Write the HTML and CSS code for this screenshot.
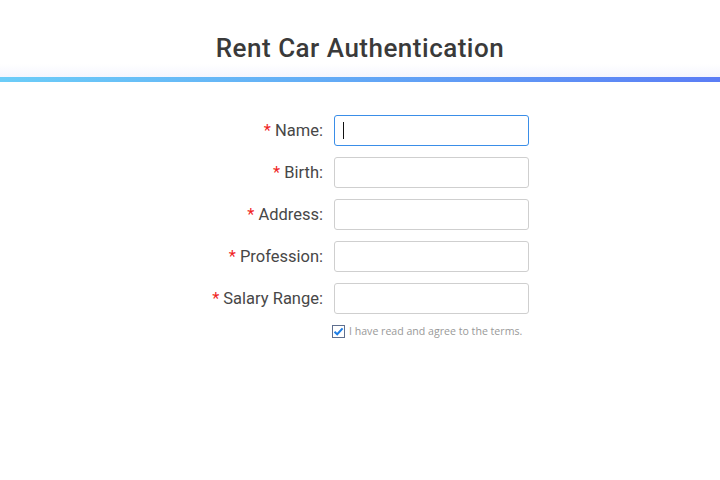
FILE: index.html
```html
<!DOCTYPE html>
<html>
<head>
<meta charset="utf-8">
<link rel="stylesheet" href="styles.css">
</head>
<body>
<header class="header">
  <h1 class="title">Rent Car Authentication</h1>
</header>
<div class="bar"></div>
<form class="form">
  <div class="row"><label class="label"><span class="req">*</span> Name:</label><input class="input focus" type="text"><span class="caret"></span></div>
  <div class="row"><label class="label"><span class="req">*</span> Birth:</label><input class="input" type="text"></div>
  <div class="row"><label class="label"><span class="req">*</span> Address:</label><input class="input" type="text"></div>
  <div class="row"><label class="label"><span class="req">*</span> Profession:</label><input class="input" type="text"></div>
  <div class="row"><label class="label"><span class="req">*</span> Salary Range:</label><input class="input" type="text"></div>
  <div class="agree">
    <span class="check"><svg width="11" height="11" viewBox="0 0 11 11"><path d="M1.5 5.8 L4.2 8.3 L9.6 2.4" fill="none" stroke="#1e7ee6" stroke-width="2"/></svg></span>
    <span class="agree-text">I have read and agree to the terms.</span>
  </div>
</form>
</body>
</html>
```

FILE: styles.css
```css
* { box-sizing: border-box; }
html, body { margin: 0; padding: 0; background: #fff; }
body { font-family: Roboto, "Liberation Sans", sans-serif; }
.header {
  height: 77px;
  display: flex;
  justify-content: center;
  background: linear-gradient(to bottom, #ffffff 0px, #ffffff 64px, #f5f6fe 77px);
}
.title {
  margin: 0;
  padding-top: 32px;
  font-size: 26px;
  font-weight: 500;
  letter-spacing: 0.5px;
  color: #3a3a3a;
  line-height: 32px;
}
.bar {
  height: 5px;
  background: linear-gradient(to right, #6ccdf8 0%, #64b0f6 40%, #5b7df5 100%);
}
.form {
  display: flex;
  flex-direction: column;
  align-items: flex-start;
  padding-top: 33px;
  gap: 11px;
}
.row {
  display: flex;
  align-items: center;
  position: relative;
  height: 31px;
}
.label {
  width: 334px;
  text-align: right;
  padding-right: 11px;
  font-size: 16.5px;
  color: #474747;
  margin-top: -1px;
}
.req { color: #f01f1f; }
.input {
  width: 195px;
  height: 31px;
  margin: 0;
  border: 1px solid #cfcfcf;
  border-radius: 3px;
  outline: none;
  background: #fff;
  font-size: 14px;
}
.input.focus { border-color: #3a8ee8; }
.caret {
  position: absolute;
  left: 343px;
  top: 7px;
  width: 1px;
  height: 17px;
  background: #111;
}
.agree {
  display: flex;
  align-items: center;
  margin-left: 332px;
  margin-top: -1px;
  gap: 4px;
}
.check {
  width: 13px;
  height: 13px;
  border: 1px solid #5f6f8f;
  display: flex;
  align-items: center;
  justify-content: center;
}
.agree-text {
  font-family: "Open Sans", sans-serif;
  font-size: 10.6px;
  color: #999;
}
```
